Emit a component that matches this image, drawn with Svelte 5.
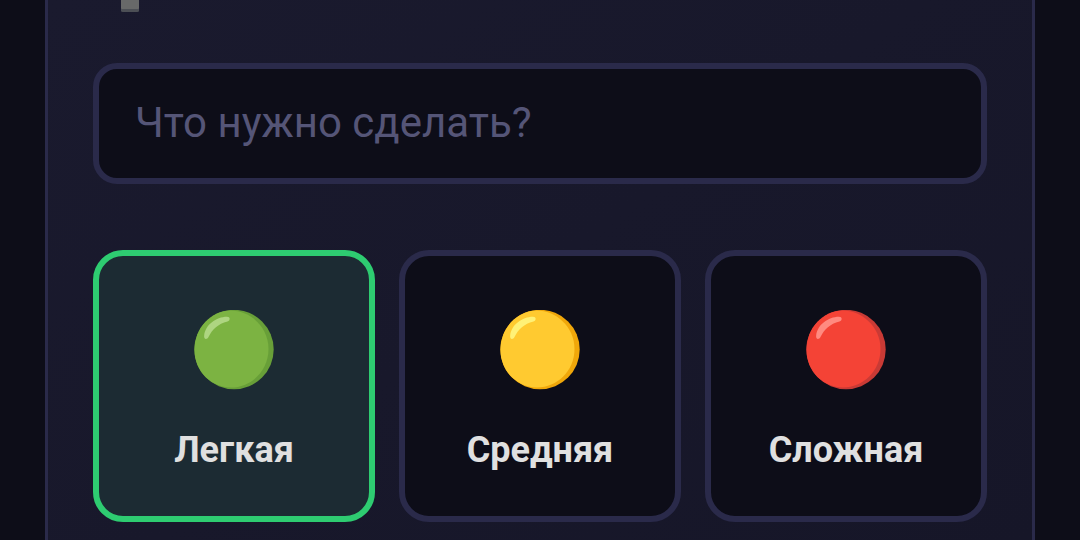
<script>
  const levels = [
    { id: 'easy', label: 'Легкая', base: '#7cb342', shade: '#689f38', shine: '#aed581' },
    { id: 'medium', label: 'Средняя', base: '#ffca30', shade: '#f0a70a', shine: '#fff176' },
    { id: 'hard', label: 'Сложная', base: '#f44336', shade: '#c93a35', shine: '#ff8a80' }
  ];

  let task = $state('');
  let selected = $state('easy');
</script>

<main class="card">
  <svg class="mark" viewBox="0 0 18 12" aria-hidden="true">
    <path d="M0 0H18V10.500Q18 12 16.500 12H1.500Q0 12 0 10.500Z" fill="#4c4f55" />
    <path d="M0 0H18V8Q18 9 17 9H1Q0 9 0 8Z" fill="#686969" />
  </svg>

  <input class="task" type="text" placeholder="Что нужно сделать?" aria-label="Что нужно сделать?" bind:value={task} />

  <div class="levels">
    {#each levels as level (level.id)}
      <button
        type="button"
        class="level"
        class:active={selected === level.id}
        aria-pressed={selected === level.id}
        onclick={() => (selected = level.id)}
      >
        <svg class="ball" viewBox="0 0 80 80" aria-hidden="true">
          <circle cx="40" cy="39.500" r="39.700" fill={level.shade} />
          <path d="M37 .5C55 .5 74.500 16 74.500 39C74.500 61 57 77.500 37 77.500C17 77.500 .5 61 .5 40C.5 18 17 .5 37 .5Z" fill={level.base} />
          <path d="M10.200 25C11.500 15 22 6.700 33 6.700C36.500 6.700 36.500 10.500 33.500 11.500C24 14 18.500 19 14.500 27C12.500 30.500 9.500 29 10.200 25Z" fill={level.shine} />
        </svg>
        <span>{level.label}</span>
      </button>
    {/each}
  </div>
</main>

<style>
  :global(body) {
    background: #0d0d18;
    font-family: Roboto, "Noto Sans", sans-serif;
  }

  .card {
    box-sizing: border-box;
    min-height: 100vh;
    margin: 0 45px;
    padding: 0 45px 18px;
    border: solid #2a2a4a;
    border-width: 0 3px;
    background: linear-gradient(145deg, #1a1a2e, #161628);
  }

  .mark {
    display: block;
    width: 18px;
    height: 12px;
    margin: 0 28px 51px;
  }

  .task {
    display: block;
    box-sizing: border-box;
    width: 100%;
    height: 121px;
    margin: 0 0 66px;
    padding: 0 36px 2px;
    border: 6px solid #2a2a4a;
    border-radius: 24px;
    outline: none;
    background: #0d0d18;
    color: #e0e0e0;
    font: 400 42px/48px Roboto, "Noto Sans", sans-serif;
  }

  .task::placeholder {
    color: #555577;
    opacity: 1;
  }

  .levels {
    display: grid;
    grid-template-columns: repeat(3, 1fr);
    gap: 24px;
  }

  .level {
    display: flex;
    flex-direction: column;
    align-items: center;
    gap: 39px;
    padding: 54px 24px 45px;
    border: 6px solid #2a2a4a;
    border-radius: 30px;
    background: #0d0d18;
    color: #e0e0e0;
    font: 700 36px/42px Roboto, "Noto Sans", sans-serif;
    cursor: pointer;
  }

  .level.active {
    border-color: #2ecc71;
    background: #1c2b33;
  }

  .ball {
    display: block;
    width: 80px;
    height: 80px;
  }
</style>
